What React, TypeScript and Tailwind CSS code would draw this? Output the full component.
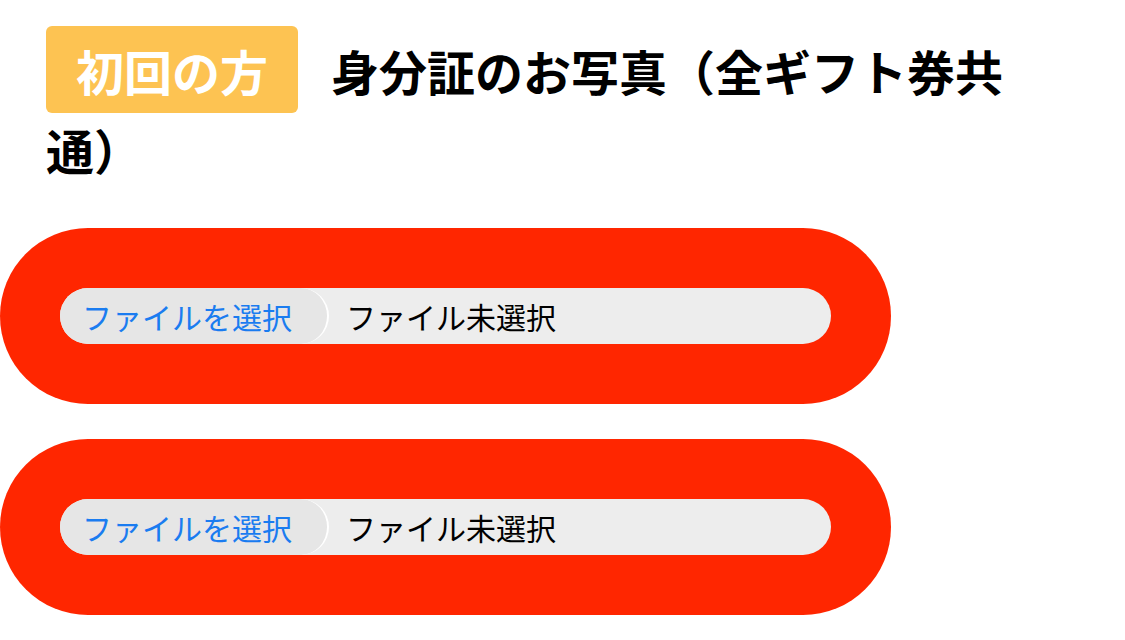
import React from "react";

const FileField = () => (
  <div className="w-[891px] rounded-full bg-[#ff2600] p-[60px]">
    <div className="flex h-[56px] items-center rounded-full bg-[#ededed]">
      <div className="flex h-full w-[269px] shrink-0 items-center rounded-full border-r-2 border-white bg-[#e6e6e6] pl-[22px] text-[30px] text-[#1a7cf0]">
        ファイルを選択
      </div>
      <span className="ml-[17px] text-[30px] text-black">ファイル未選択</span>
    </div>
  </div>
);

export default function App() {
  return (
    <div
      lang="ja"
      className="min-h-[640px] bg-white"
      style={{ fontFamily: '"Noto Sans CJK JP", "Noto Sans", sans-serif' }}
    >
      <h2 className="whitespace-nowrap pl-[46px] pt-[26px] text-[48px] font-bold leading-[1.5] text-black">
        <span className="mr-[33px] inline-block rounded-md bg-[#fdc352] px-[30px] py-[7.5px] text-white">
          初回の方
        </span>
        身分証のお写真（全ギフト券共
        <br />
        通）
      </h2>

      <div className="mt-[43px] flex flex-col gap-[35px]">
        <FileField />
        <FileField />
      </div>
    </div>
  );
}
